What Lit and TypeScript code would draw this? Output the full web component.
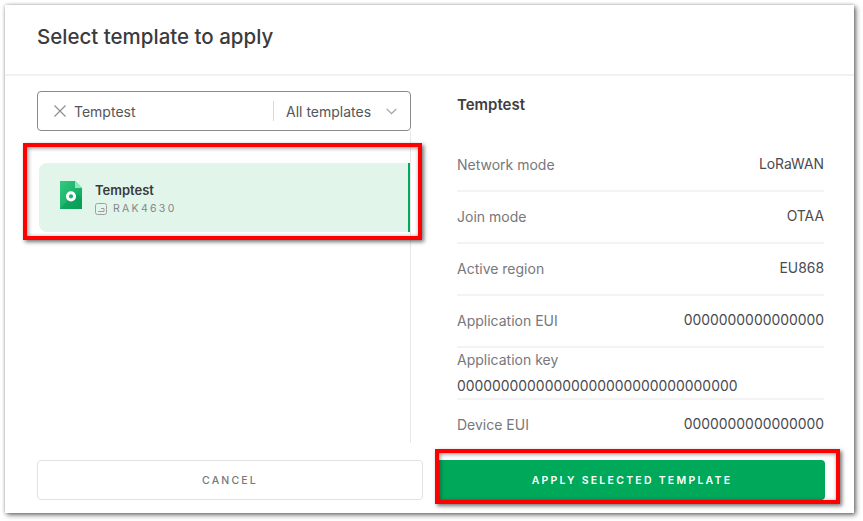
import { LitElement, html, css } from "lit";
import { customElement } from "lit/decorators.js";

const rows: [string, string][] = [
  ["Network mode", "LoRaWAN"],
  ["Join mode", "OTAA"],
  ["Active region", "EU868"],
  ["Application EUI", "0000000000000000"],
];

@customElement("app-root")
export class AppRoot extends LitElement {
  static styles = css`
    :host { display: block; width: 863px; height: 521px; background: #fff; font-family: Inter, "Liberation Sans", sans-serif; padding: 5px 0 0 5px; box-sizing: border-box; overflow: hidden; }
    .dialog { position: relative; width: 849px; height: 508px; background: #fff; box-shadow: 0 0 3px rgba(0,0,0,.25), 2px 2px 5px rgba(0,0,0,.55); display: flex; flex-direction: column; }
    .head { flex: none; box-sizing: border-box; border-bottom: 2px solid #f1f1f1; padding: 16px 32px 0; font-size: 20.5px; line-height: 32px; font-weight: 500; color: #3b3b3e; height: 71px; }
    .body { flex: none; height: 367px; display: flex; padding-left: 32px; overflow: hidden; }
    .left { width: 374px; box-sizing: border-box; flex: none; display: flex; flex-direction: column; }
    .search { height: 40px; margin-top: 15px; box-sizing: border-box; border: 1px solid #8a8a8a; border-radius: 4px; display: flex; align-items: center; font-size: 14px; color: #55555a; padding-left: 16px; line-height: 20px; }
    .search svg.x { width: 12px; height: 12px; flex: none; margin-right: 8px; }
    .search .q { flex: 1; padding-top: 1px; }
    .search .sel { width: 137px; box-sizing: border-box; border-left: 1px solid #d8d8d8; padding-left: 12px; height: 20px; line-height: 20px; display: flex; align-items: center; justify-content: space-between; padding-right: 13px; padding-top: 1px; }
    .list { flex: 1; border-right: 1px solid #e8e8e8; padding-top: 32px; }
    .card { margin-left: 2px; height: 69px; box-sizing: border-box; background: #e2f5ea; border-right: 2px solid #00a85a; border-radius: 8px 0 0 8px; display: flex; align-items: center; padding-left: 21px; }
    .card .ic { width: 22px; height: 28px; flex: none; margin-right: 13px; margin-top: -5px; }
    .info { padding-top: 2px; }
    .name { font-size: 13px; font-weight: 600; color: #3a3a3d; line-height: 17px; }
    .model { display: flex; align-items: center; gap: 6px; font-size: 10.5px; letter-spacing: 2.3px; color: #85858a; line-height: 14px; margin-top: 3px; }
    .model svg { width: 12px; height: 12px; flex: none; }
    .right { margin-left: 46px; width: 367px; flex: none; }
    .title { font-size: 15px; font-weight: 600; color: #3e3e42; line-height: 20px; margin-top: 19px; margin-bottom: 25px; }
    .row { height: 52px; box-sizing: border-box; border-bottom: 2px solid #f3f3f3; padding-bottom: 2px; display: flex; align-items: center; justify-content: space-between; font-size: 14px; }
    .row:last-child { border-bottom: none; padding-bottom: 4px; }
    .k { color: #77777c; }
    .v { color: #4a4a4f; font-size: 13.9px; }
    .row.stack { flex-direction: column; align-items: flex-start; justify-content: flex-start; padding-top: 3px; padding-bottom: 0; gap: 9px; }
    .stack div { line-height: 17px; }
    .stack .v { margin-top: 1px; }
    .foot { display: flex; gap: 12px; padding: 17px 29px 0 32px; }
    .btn { height: 40px; box-sizing: border-box; border-radius: 4px; display: flex; align-items: center; justify-content: center; font-size: 10.5px; font-weight: 500; letter-spacing: 2.2px; }
    .cancel { width: 386px; border: 1px solid #e2e2e2; color: #77777c; background: #fff; }
    .apply { width: 390px; padding-left: 4px; background: #00a85a; color: #fff; font-weight: 600; letter-spacing: 2.25px; }
    .mark { position: absolute; box-sizing: border-box; border: 4px solid #fe0000; box-shadow: 2px 2px 4px rgba(0,0,0,.55), inset 1px 1px 4px rgba(0,0,0,.45); pointer-events: none; }
    .m1 { left: 18px; top: 138px; width: 399px; height: 97px; }
    .m2 { left: 430px; top: 444px; width: 405px; height: 55px; }
  `;

  render() {
    return html`
      <div class="dialog">
        <div class="head">Select template to apply</div>
        <div class="body">
          <div class="left">
            <div class="search">
              <svg class="x" viewBox="0 0 12 12" fill="none" stroke="#8f8f8f" stroke-width="1.2"><path d="M.5.5l11 11M11.5.5l-11 11"/></svg>
              <span class="q">Temptest</span>
              <span class="sel">All templates
                <svg width="11" height="7" viewBox="0 0 11 7" fill="none" stroke="#a0a0a0" stroke-width="1.2"><path d="M.7.8l4.8 4.8L10.3.8"/></svg>
              </span>
            </div>
            <div class="list">
              <div class="card">
                <svg class="ic" viewBox="0 0 22 28">
                  <defs><linearGradient id="g" x1="0" y1="0" x2="1" y2="1"><stop offset="0" stop-color="#34c97f"/><stop offset="1" stop-color="#06a259"/></linearGradient></defs>
                  <path d="M0 0H15L22 7V28H0Z" fill="url(#g)"/>
                  <path d="M15 0L22 7H15Z" fill="#8fe8bb"/>
                  <path d="M0 28L8 19L14 11L22 17V28Z" fill="#0a9a55" opacity=".55"/>
                  <circle cx="11" cy="15.3" r="3.6" fill="#1eb36a" stroke="#fff" stroke-width="3"/>
                </svg>
                <div class="info">
                  <div class="name">Temptest</div>
                  <div class="model">
                    <svg viewBox="0 0 12 12" fill="none" stroke="#a0a0a0" stroke-width="1"><rect x=".5" y=".5" width="11" height="11" rx="2"/><path d="M3 8.5h6V5.5H6"/></svg>
                    RAK4630
                  </div>
                </div>
              </div>
            </div>
          </div>
          <div class="right">
            <div class="title">Temptest</div>
            ${rows.map(([k, v]) => html`<div class="row"><span class="k">${k}</span><span class="v">${v}</span></div>`)}
            <div class="row stack"><div class="k">Application key</div><div class="v">00000000000000000000000000000000</div></div>
            <div class="row"><span class="k">Device EUI</span><span class="v">0000000000000000</span></div>
          </div>
        </div>
        <div class="foot">
          <div class="btn cancel">CANCEL</div>
          <div class="btn apply">APPLY SELECTED TEMPLATE</div>
        </div>
        <div class="mark m1"></div>
        <div class="mark m2"></div>
      </div>
    `;
  }
}
